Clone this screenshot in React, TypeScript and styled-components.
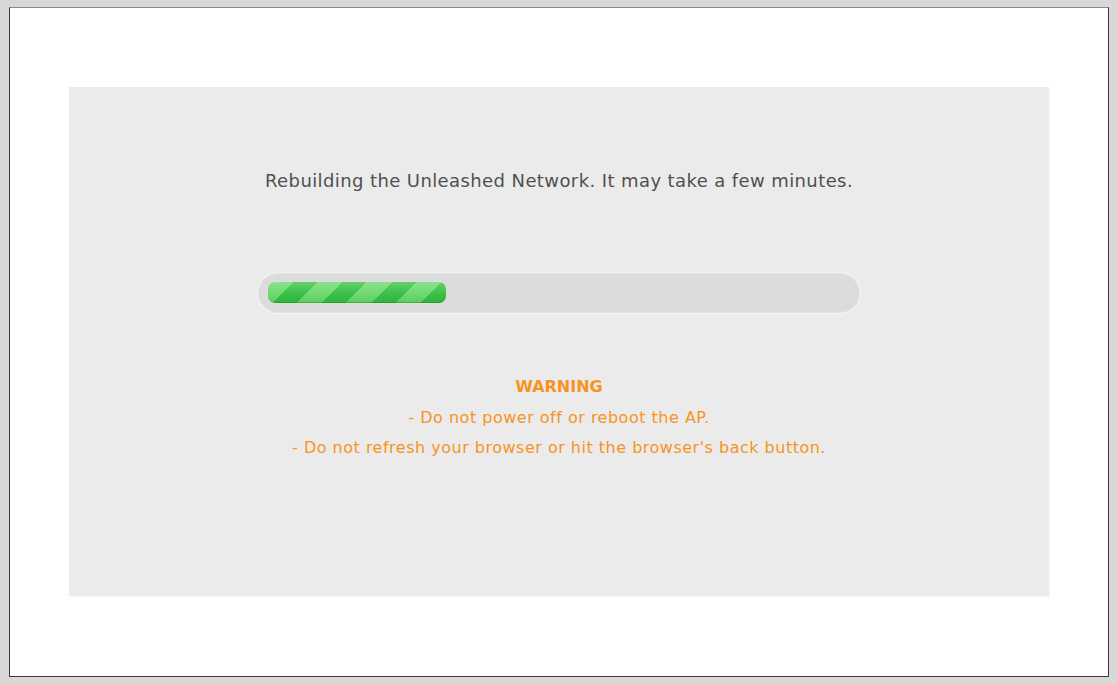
import React from "react";
import styled, { createGlobalStyle } from "styled-components";

const Global = createGlobalStyle`
  html, body {
    margin: 0;
    padding: 0;
    background: #d8d8d8;
  }
  body {
    font-family: "DejaVu Sans", "Liberation Sans", sans-serif;
  }
`;

const Screen = styled.div`
  width: 1117px;
  height: 684px;
  box-sizing: border-box;
  padding: 7px 8px 7px 9px;
`;

const Frame = styled.div`
  box-sizing: border-box;
  height: 670px;
  background: #ffffff;
  border: 1px solid #3a3a3a;
  border-top-color: #8a8a8a;
  padding: 79px 59px 80px 59px;
`;

const Panel = styled.div`
  height: 509px;
  background: #ebebeb;
  box-shadow: 1px 1px 2px rgba(0, 0, 0, 0.04);
  display: flex;
  flex-direction: column;
  align-items: center;
  padding-top: 81px;
  box-sizing: border-box;
`;

const Message = styled.div`
  font-size: 18px;
  letter-spacing: 0.4px;
  line-height: 26px;
  color: #505050;
  text-align: center;
`;

const Track = styled.div`
  margin-top: 80px;
  width: 600px;
  height: 38px;
  box-sizing: border-box;
  padding: 8px 9px 9px;
  border-radius: 19px;
  background: #dcdcdc;
  box-shadow: 0 0 0 1px #e3e3e3, 0 0 2px 2px rgba(255, 255, 255, 0.55);
`;

const Fill = styled.div`
  height: 21px;
  border-radius: 7px;
  background:
    linear-gradient(
      to bottom,
      rgba(255, 255, 255, 0.22) 0%,
      rgba(255, 255, 255, 0.06) 45%,
      rgba(0, 0, 0, 0) 60%,
      rgba(0, 80, 0, 0.12) 100%
    ),
    repeating-linear-gradient(
      135deg,
      #6cd96e 0px,
      #6cd96e 18px,
      #38c044 18px,
      #38c044 35px
    );
  box-shadow: inset 0 -1px 0 rgba(0, 90, 0, 0.25), 0 0 1px rgba(255, 255, 255, 0.8);
`;

const Warning = styled.div`
  margin-top: 60px;
  color: #f7941e;
  font-size: 16px;
  letter-spacing: 0.5px;
  line-height: 30.5px;
  text-align: center;
`;

const WarningTitle = styled.div`
  font-weight: bold;
  letter-spacing: 0;
`;

const WarningLine = styled.div``;

export default function App() {
  const progress = 0.305;
  return (
    <>
      <Global />
      <Screen>
        <Frame>
          <Panel>
            <Message>Rebuilding the Unleashed Network. It may take a few minutes.</Message>
            <Track>
              <Fill style={{ width: `${progress * 100}%` }} />
            </Track>
            <Warning>
              <WarningTitle>WARNING</WarningTitle>
              <WarningLine>- Do not power off or reboot the AP.</WarningLine>
              <WarningLine>- Do not refresh your browser or hit the browser's back button.</WarningLine>
            </Warning>
          </Panel>
        </Frame>
      </Screen>
    </>
  );
}
